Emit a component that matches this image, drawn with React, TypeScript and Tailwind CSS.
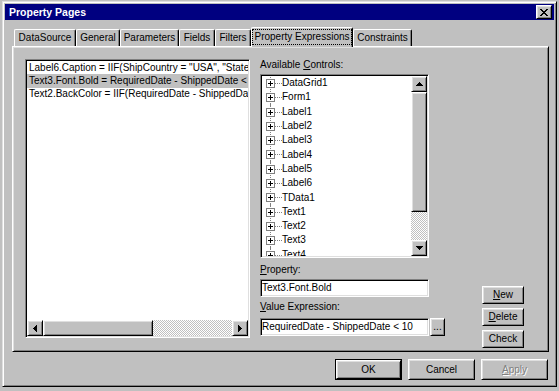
import React from 'react';

const raised =
  'border border-t-white border-l-white border-r-black border-b-black shadow-[inset_1px_1px_#dfdfdf,inset_-1px_-1px_#808080]';
const sunken =
  'border border-t-[#808080] border-l-[#808080] border-r-white border-b-white shadow-[inset_1px_1px_#000,inset_-1px_-1px_#dfdfdf] p-px';

const tabs = [
  { label: 'DataSource', w: 'w-[62px]' },
  { label: 'General', w: 'w-[44px]' },
  { label: 'Parameters', w: 'w-[59px]' },
  { label: 'Fields', w: 'w-[36px]' },
  { label: 'Filters', w: 'w-[36px]' },
  { label: 'Property Expressions', w: 'w-[102px]', active: true },
  { label: 'Constraints', w: 'w-[59px]' },
];

const expressions = [
  'Label6.Caption = IIF(ShipCountry = "USA", "State:", "Region:")',
  'Text3.Font.Bold = RequiredDate - ShippedDate < 10',
  'Text2.BackColor = IIF(RequiredDate - ShippedDate < 10, vbRed, vbWhite)',
];

const controls = [
  'DataGrid1', 'Form1', 'Label1', 'Label2', 'Label3', 'Label4', 'Label5',
  'Label6', 'TData1', 'Text1', 'Text2', 'Text3', 'Text4',
];

// pixel arrows for scrollbar buttons
function Arrow({ dir }: { dir: 'up' | 'down' | 'left' | 'right' }) {
  const d = {
    up: 'M3 0h1v1h1v1h1v1h1v1H0V3h1V2h1V1h1z',
    down: 'M0 0h7v1H6v1H5v1H4v1H3V3H2V2H1V1H0z',
    left: 'M3 0h1v7H3V6H2V5H1V4H0V3h1V2h1V1h1z',
    right: 'M0 0h1v1h1v1h1v1h1v1H3v1H2v1H1v1H0z',
  }[dir];
  const vertical = dir === 'up' || dir === 'down';
  return (
    <svg width={vertical ? 7 : 4} height={vertical ? 4 : 7} shapeRendering="crispEdges">
      <path d={d} fill="#000" />
    </svg>
  );
}

function ScrollButton({ dir }: { dir: 'up' | 'down' | 'left' | 'right' }) {
  return (
    <div className={`w-[16px] h-[16px] shrink-0 bg-[#c0c0c0] flex items-center justify-center ${raised}`}>
      <Arrow dir={dir} />
    </div>
  );
}

function TreeGlyph() {
  return (
    <svg width="16" height="100%" className="shrink-0 h-full overflow-visible" shapeRendering="crispEdges">
      <line x1="4.5" y1="-1" x2="4.5" y2="16" stroke="#808080" strokeDasharray="1 1" />
      <line x1="9" y1="7.5" x2="16" y2="7.5" stroke="#808080" strokeDasharray="1 1" />
      <rect x="0.5" y="3.5" width="8" height="8" fill="#fff" stroke="#808080" />
      <path d="M2 7h5v1H2z M4 5h1v5H4z" fill="#000" />
    </svg>
  );
}

function Btn({ children, className = '' }: { children: React.ReactNode; className?: string }) {
  return (
    <div className={`bg-[#c0c0c0] flex items-center justify-center whitespace-nowrap ${raised} ${className}`}>
      {children}
    </div>
  );
}

export default function App() {
  return (
    <div className="w-[559px] h-[391px] bg-[#c0c0c0] overflow-hidden font-['Liberation_Sans',Arial,sans-serif] text-[10px] text-black pt-[1px] pl-[2px] leading-none whitespace-nowrap">
      <div className="w-[555px] h-[386px] border border-t-[#dfdfdf] border-l-[#dfdfdf] border-r-black border-b-black shadow-[inset_1px_1px_#fff,inset_-1px_-1px_#808080] p-[2px] flex flex-col">
        {/* Title bar */}
        <div className="h-[16px] shrink-0 bg-[#000080] flex items-center justify-between pl-[4px] pr-[2px]">
          <span className="text-white font-bold text-[10.5px]">Property Pages</span>
          <Btn className="w-[16px] h-[14px]">
            <svg width="8" height="7" shapeRendering="crispEdges">
              <path
                d="M0 0h2v1H0z M6 0h2v1H6z M1 1h2v1H1z M5 1h2v1H5z M2 2h4v1H2z M3 3h2v1H3z M2 4h4v1H2z M1 5h2v1H1z M5 5h2v1H5z M0 6h2v1H0z M6 6h2v1H6z"
                fill="#000"
              />
            </svg>
          </Btn>
        </div>

        {/* Tabs */}
        <div className="mt-[7px] ml-[7px] pl-[2px] h-[20px] flex items-end relative z-10 -mb-px">
          {tabs.map((t) =>
            t.active ? (
              <div
                key={t.label}
                className={`${t.w} h-[20px] bg-[#c0c0c0] border-l border-t border-r border-l-white border-t-white border-r-black shadow-[inset_-1px_0_#808080] rounded-t-[2px] flex items-start justify-center pt-[1px]`}
              >
                <span className="border border-dotted border-black px-[1px] h-[16px] flex items-center">{t.label}</span>
              </div>
            ) : (
              <div
                key={t.label}
                className={`${t.w} h-[17px] mb-px border-l border-t border-r border-l-white border-t-white border-r-black shadow-[inset_-1px_0_#808080] rounded-t-[2px] flex items-center justify-center`}
              >
                {t.label}
              </div>
            ),
          )}
        </div>

        {/* Tab panel */}
        <div className={`ml-[7px] w-[537px] h-[306px] shrink-0 pl-[12px] pt-[12px] flex ${raised}`}>
          {/* expression list */}
          <div className={`w-[225px] h-[279px] bg-white flex flex-col ${sunken}`}>
            <div className="flex-1 overflow-hidden">
              {expressions.map((e, i) => (
                <div
                  key={i}
                  className={`h-[14px] flex items-center pl-[2px] -mt-px first:mt-0 ${i === 1 ? 'bg-[#c0c0c0]' : ''}`}
                >
                  {e}
                </div>
              ))}
            </div>
            <div className="h-[16px] flex">
              <ScrollButton dir="left" />
              <div className={`w-[110px] h-[16px] bg-[#c0c0c0] ${raised}`} />
              <div className="flex-1 bg-[image:repeating-conic-gradient(#c0c0c0_0_25%,#ffffff_0_50%)] bg-[length:2px_2px]" />
              <ScrollButton dir="right" />
            </div>
          </div>

          {/* right column */}
          <div className="ml-[10px] w-[185px] flex flex-col">
            <div className="h-[15px] leading-[11px]">
              Available <span className="underline">C</span>ontrols:
            </div>
            <div className={`w-[169px] h-[184px] bg-white flex ${sunken}`}>
              <div className="flex-1 overflow-hidden pl-[4px]">
                {controls.map((c) => (
                  <div key={c} className="h-[14.3px] flex items-center">
                    <TreeGlyph />
                    <span>{c}</span>
                  </div>
                ))}
              </div>
              <div className="w-[16px] flex flex-col">
                <ScrollButton dir="up" />
                <div className={`h-[120px] bg-[#c0c0c0] ${raised}`} />
                <div className="flex-1 bg-[image:repeating-conic-gradient(#c0c0c0_0_25%,#ffffff_0_50%)] bg-[length:2px_2px]" />
                <ScrollButton dir="down" />
              </div>
            </div>
            <div className="h-[21px] pt-[5px] leading-[13px]">
              <span className="underline">P</span>roperty:
            </div>
            <div className={`w-[169px] h-[18px] bg-white flex items-center pl-[1px] ${sunken}`}>Text3.Font.Bold</div>
            <div className="h-[21px] pt-[3px] leading-[13px]">
              <span className="underline">V</span>alue Expression:
            </div>
            <div className="flex">
              <div className={`w-[169px] h-[18px] bg-white flex items-center pl-[1px] ${sunken}`}>
                RequiredDate - ShippedDate &lt; 10
              </div>
              <Btn className="w-[15px] h-[18px] ml-px !items-end pb-[3px]">...</Btn>
            </div>
          </div>

          {/* side buttons */}
          <div className="ml-[37px] mt-[227px] flex flex-col gap-[4px]">
            <Btn className="w-[42px] h-[18px]">
              <span className="underline">N</span>ew
            </Btn>
            <Btn className="w-[42px] h-[18px]">
              <span className="underline">D</span>elete
            </Btn>
            <Btn className="w-[42px] h-[18px]">Check</Btn>
          </div>
        </div>

        {/* dialog buttons */}
        <div className="mt-[7px] flex justify-end gap-[6px] pr-[6px]">
          <div className="w-[67px] h-[21px] border border-black flex">
            <Btn className="flex-1">OK</Btn>
          </div>
          <Btn className="w-[67px] h-[21px]">Cancel</Btn>
          <Btn className="w-[67px] h-[21px] text-[#808080] [text-shadow:1px_1px_0_#fff]">
            <span className="underline">A</span>pply
          </Btn>
        </div>
      </div>
    </div>
  );
}
